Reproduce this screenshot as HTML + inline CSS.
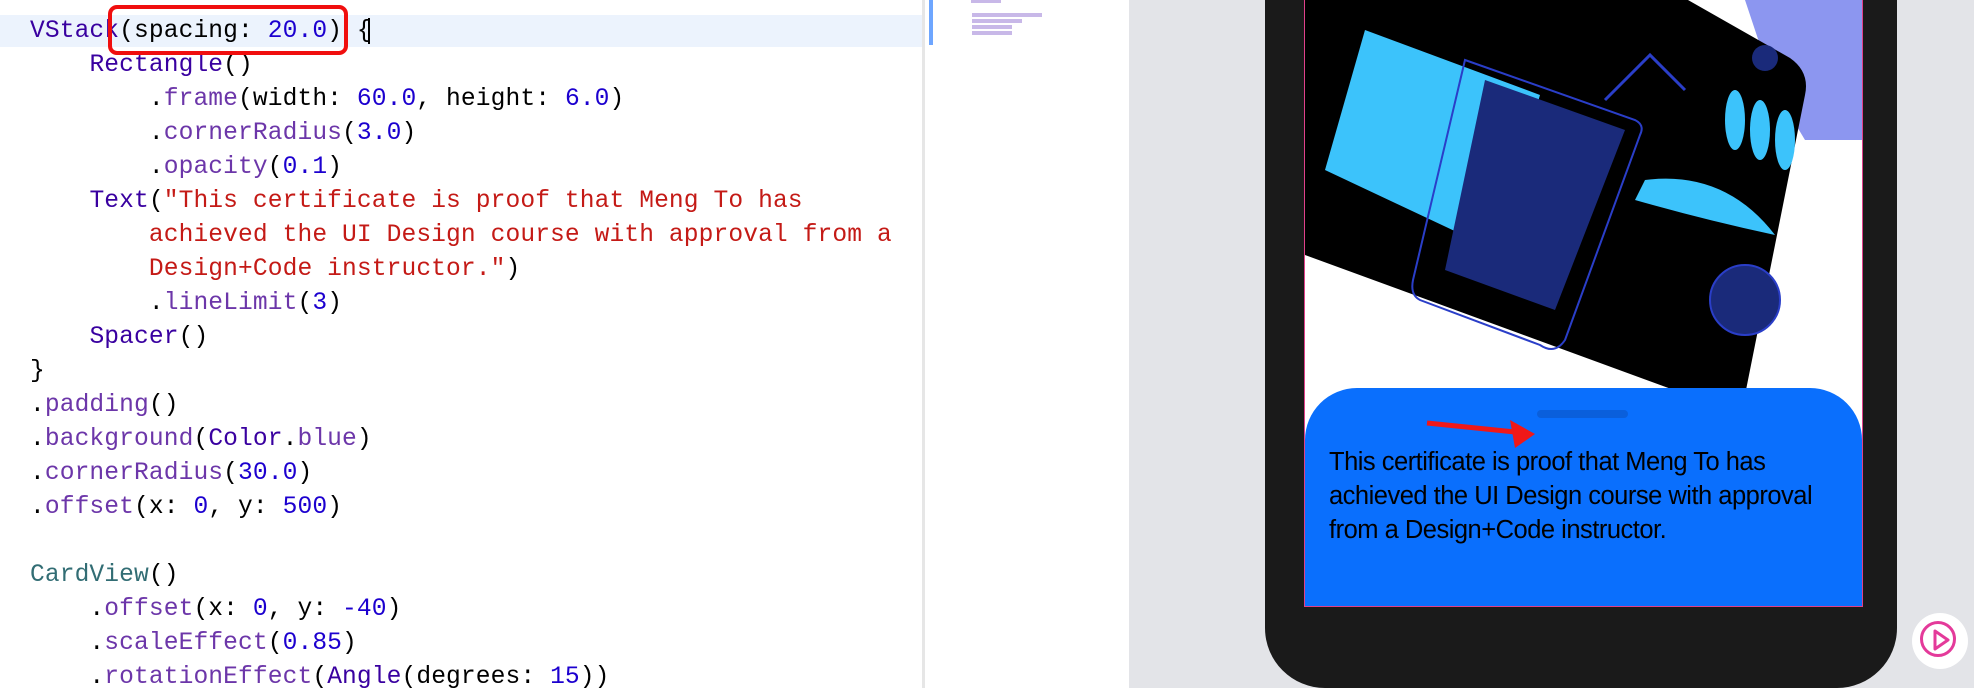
<!DOCTYPE html>
<html><head><meta charset="utf-8"><style>
body{margin:0;width:1974px;height:688px;overflow:hidden;background:#fff;position:relative;font-family:"Liberation Mono",monospace}
.code{position:absolute;left:0;top:15px;width:922px}
.l{height:34px;line-height:34px;font-size:24.6px;white-space:pre;color:#000;padding-left:30px;letter-spacing:0.1px}
.k{color:#3900a0}.m{color:#6c36a9}.n{color:#1c00cf}.s{color:#c41a16}.t{color:#326d74}
.hl{position:absolute;left:0;top:15px;width:922px;height:32px;background:#ecf3fd}
</style></head><body>
<div class="hl"></div>
<div style="position:absolute;left:922px;top:0;width:3px;height:688px;background:#e6e6e6"></div>
<div style="position:absolute;left:929px;top:0;width:4px;height:45px;background:#6ea6ff"></div>
<div style="position:absolute;left:971px;top:0;width:30px;height:3px;background:#c8b8e8"></div>
<div style="position:absolute;left:972px;top:13px;width:70px;height:4px;background:#c8b8e8"></div>
<div style="position:absolute;left:972px;top:19px;width:50px;height:4px;background:#c8b8e8"></div>
<div style="position:absolute;left:972px;top:25px;width:40px;height:4px;background:#c8b8e8"></div>
<div style="position:absolute;left:972px;top:31px;width:40px;height:4px;background:#c8b8e8"></div>
<div style="position:absolute;left:1129px;top:0;width:845px;height:688px;background:#e3e4e8"></div>
<div class="code">
<div class="l"><span class="k">VStack</span>(spacing: <span class="n">20.0</span>) {</div>
<div class="l">    <span class="k">Rectangle</span>()</div>
<div class="l">        .<span class="m">frame</span>(width: <span class="n">60.0</span>, height: <span class="n">6.0</span>)</div>
<div class="l">        .<span class="m">cornerRadius</span>(<span class="n">3.0</span>)</div>
<div class="l">        .<span class="m">opacity</span>(<span class="n">0.1</span>)</div>
<div class="l">    <span class="k">Text</span>(<span class="s">"This certificate is proof that Meng To has</span></div>
<div class="l"><span class="s">        achieved the UI Design course with approval from a</span></div>
<div class="l"><span class="s">        Design+Code instructor."</span>)</div>
<div class="l">        .<span class="m">lineLimit</span>(<span class="n">3</span>)</div>
<div class="l">    <span class="k">Spacer</span>()</div>
<div class="l">}</div>
<div class="l">.<span class="m">padding</span>()</div>
<div class="l">.<span class="m">background</span>(<span class="k">Color</span>.<span class="m">blue</span>)</div>
<div class="l">.<span class="m">cornerRadius</span>(<span class="n">30.0</span>)</div>
<div class="l">.<span class="m">offset</span>(x: <span class="n">0</span>, y: <span class="n">500</span>)</div>
<div class="l"> </div>
<div class="l"><span class="t">CardView</span>()</div>
<div class="l">    .<span class="m">offset</span>(x: <span class="n">0</span>, y: <span class="n">-40</span>)</div>
<div class="l">    .<span class="m">scaleEffect</span>(<span class="n">0.85</span>)</div>
<div class="l">    .<span class="m">rotationEffect</span>(<span class="k">Angle</span>(degrees: <span class="n">15</span>))</div>
</div>
<div style="position:absolute;left:108px;top:5px;width:232px;height:42px;border:4px solid #f00e0e;border-radius:9px"></div>
<div style="position:absolute;left:368px;top:18px;width:2px;height:26px;background:#000"></div>

<div style="position:absolute;left:1265px;top:-40px;width:632px;height:728px;background:#1a1a1a;border-radius:0 0 60px 60px"></div>
<div style="position:absolute;left:1304px;top:0;width:557px;height:606px;background:#fff;border:1px solid #e0408a;border-top:none;overflow:hidden">
<svg width="557" height="606" style="position:absolute;left:0;top:0">
<path d="M440 0 L557 0 L557 140 L500 140 L470 90 Z" fill="#8c96f0"/>
<path d="M0 0 L40 0 L0 60 Z" fill="#1fb8d8"/>
<path d="M0 0 L383 0 L485 58 Q505 72 500 95 L440 395 Q432 412 410 405 L0 255 Z" fill="#000"/>
<path d="M60 30 L235 95 L190 250 L20 170 Z" fill="#3cc3fb"/>
<path d="M160 60 L330 120 Q340 125 335 135 L260 340 Q250 355 235 345 L115 300 Q105 295 108 280 Z" fill="none" stroke="#2a3ec8" stroke-width="2"/>
<path d="M180 80 L320 130 L250 310 L140 270 Z" fill="#1a2a7a"/>
<path d="M300 100 L345 55 L380 90" fill="none" stroke="#2a3ec8" stroke-width="3"/>
<ellipse cx="430" cy="120" rx="10" ry="30" fill="#3cc3fb"/>
<ellipse cx="455" cy="130" rx="10" ry="30" fill="#3cc3fb"/>
<ellipse cx="480" cy="140" rx="10" ry="30" fill="#3cc3fb"/>
<path d="M340 180 Q420 170 470 235 Q400 220 330 200 Z" fill="#3cc3fb"/>
<circle cx="440" cy="300" r="35" fill="#1a2a7a" stroke="#2a3ec8" stroke-width="2"/>
<circle cx="460" cy="58" r="13" fill="#1a2a7a"/>
</svg>
<div style="position:absolute;left:0;top:388px;width:557px;height:230px;background:#0a6ffd;border-radius:52px 52px 0 0"></div>
<div style="position:absolute;left:232px;top:410px;width:91px;height:8px;border-radius:4px;background:#0a5fdc"></div>
<svg width="557" height="606" style="position:absolute;left:0;top:0">
<path d="M122 423 L220 433" stroke="#f01818" stroke-width="5"/>
<path d="M230 434 L205 420 L210 448 Z" fill="#f01818"/>
</svg>
<div style="position:absolute;left:24px;top:445px;width:515px;font-family:'Liberation Sans',sans-serif;font-size:25.5px;line-height:34px;color:#000;letter-spacing:-0.5px">This certificate is proof that Meng To has achieved the UI Design course with approval from a Design+Code instructor.</div>
</div>
<div style="position:absolute;left:1912px;top:613px;width:56px;height:56px;border-radius:50%;background:#fff"></div>
<div style="position:absolute;left:1920px;top:621px;width:36px;height:36px;border-radius:50%;border:3px solid #e43a9a;box-sizing:border-box"></div>
<svg width="20" height="22" style="position:absolute;left:1932px;top:629px"><path d="M3 2 L16 11 L3 20 Z" fill="none" stroke="#e43a9a" stroke-width="3" stroke-linejoin="round"/></svg>
</body></html>
